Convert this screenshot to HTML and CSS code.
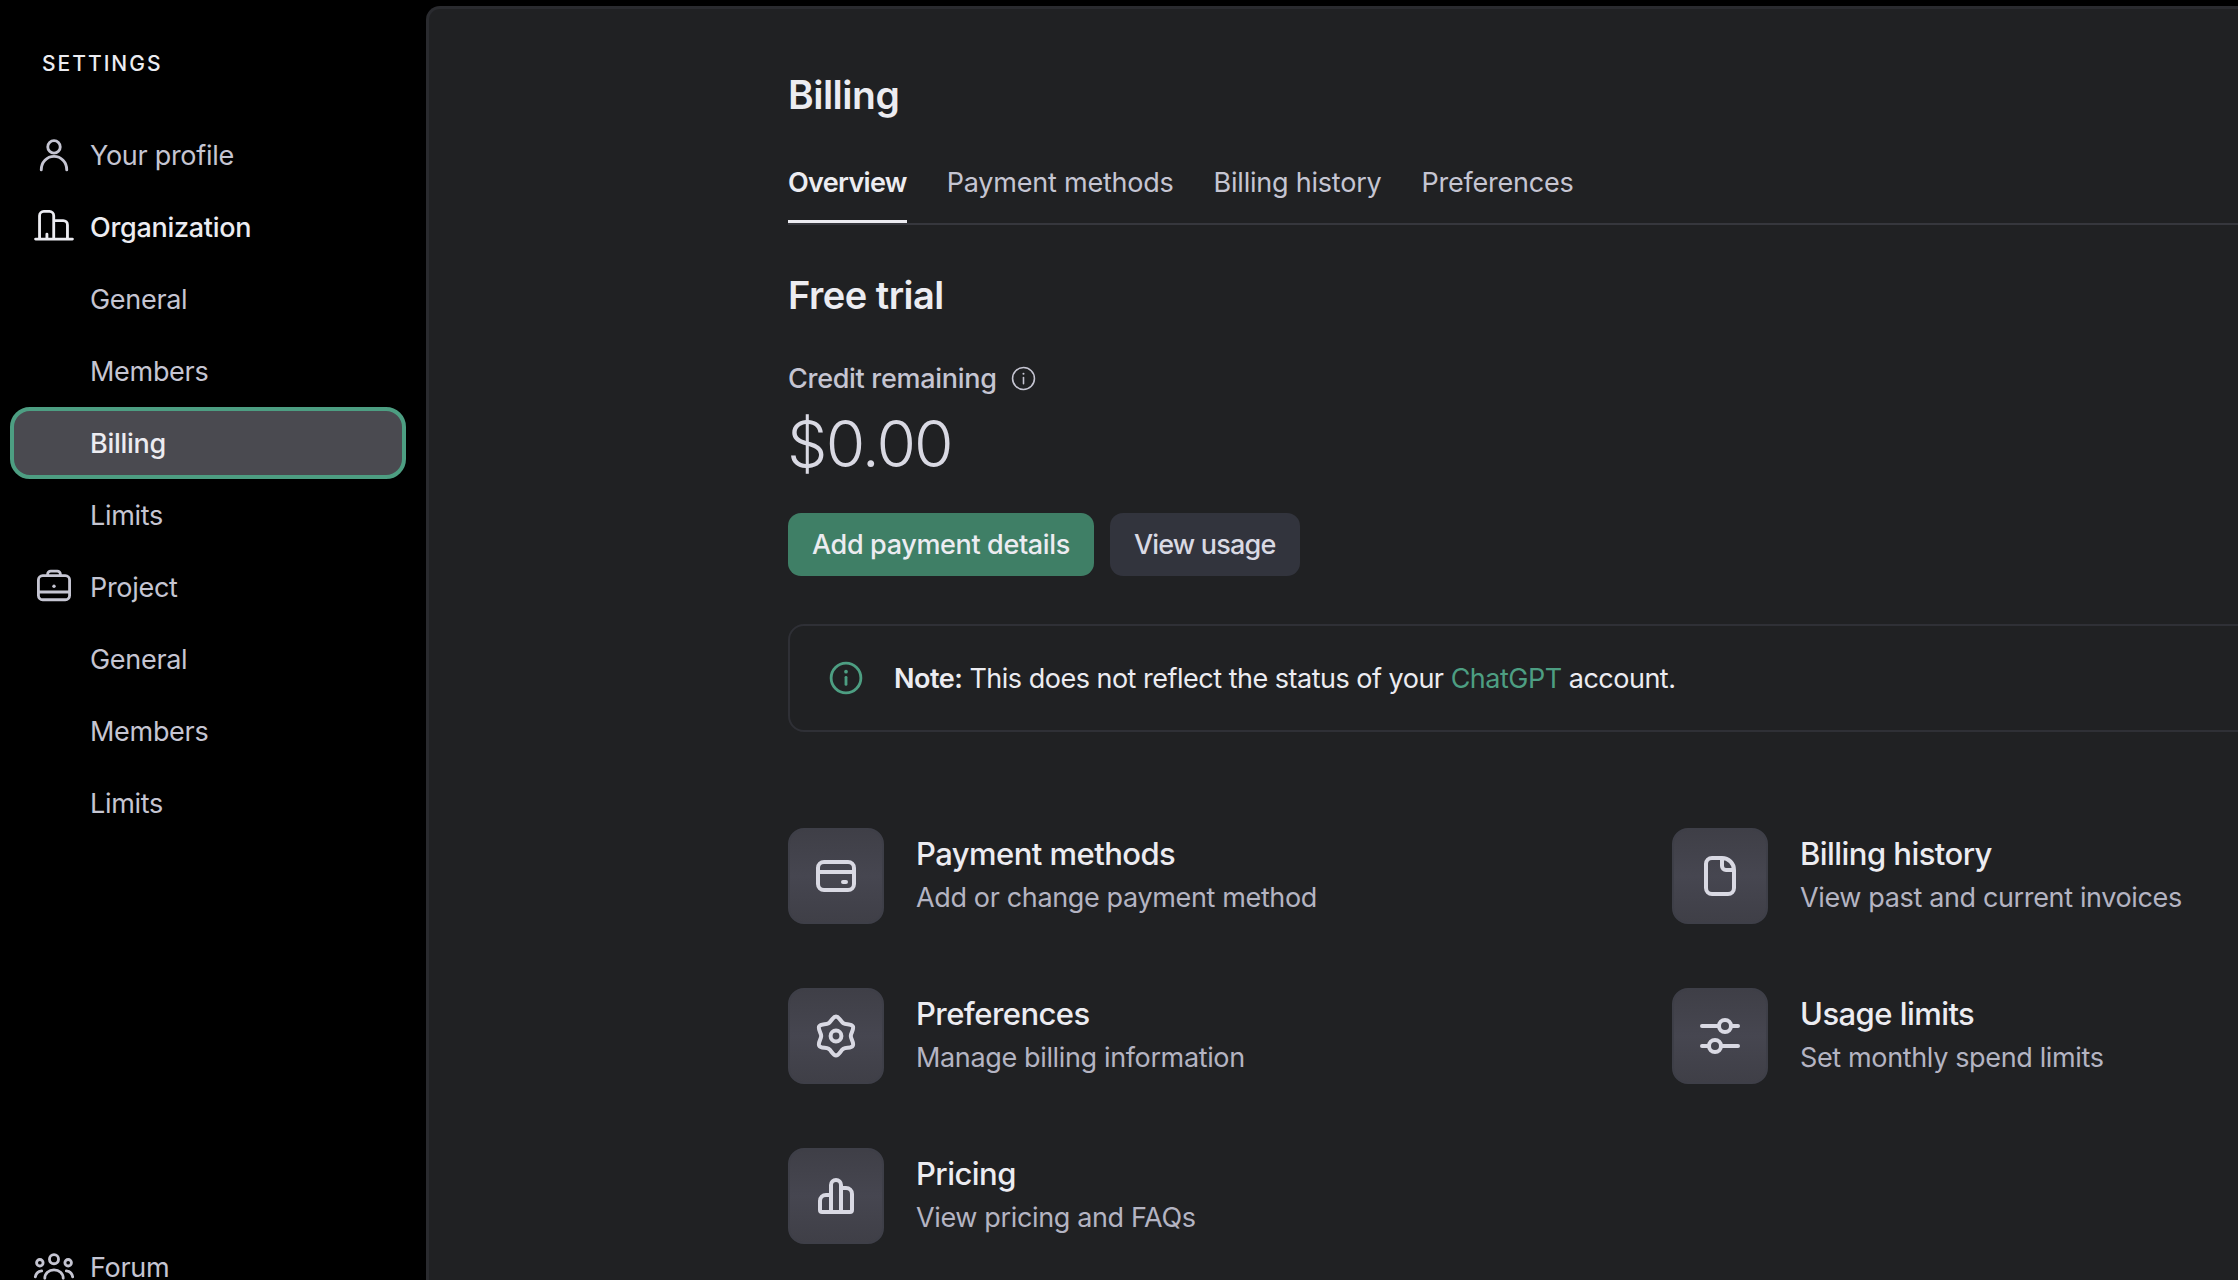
FILE: index.html
```html
<!DOCTYPE html>
<html lang="en">
<head>
<meta charset="utf-8">
<title>Billing</title>
<link rel="stylesheet" href="styles.css">
</head>
<body>
<div class="app">
  <aside class="sidebar">
    <div class="sidebar-title">SETTINGS</div>
    <nav class="nav">
      <a class="nav-row">
        <svg class="nav-icon" viewBox="0 0 24 24"><circle cx="12" cy="6.3" r="4.4"/><path d="M3 22.5c0-5.5 4-9.5 9-9.5s9 4 9 9.5"/></svg>
        <span class="nav-label">Your profile</span>
      </a>
      <a class="nav-row nav-row-strong">
        <svg class="nav-icon" viewBox="0 0 24 24"><path d="M-1 20.5h26M1.8 20.5V4a3 3 0 0 1 3-3h4a3 3 0 0 1 3 3v16.5M12 7.5h6.5a3 3 0 0 1 3 3v10M7 20.5v-3.5"/></svg>
        <span class="nav-label">Organization</span>
      </a>
      <a class="nav-row nav-child">General</a>
      <a class="nav-row nav-child">Members</a>
      <a class="nav-row nav-child nav-active">Billing</a>
      <a class="nav-row nav-child">Limits</a>
      <a class="nav-row">
        <svg class="nav-icon" viewBox="0 0 24 24"><rect x="1" y="4" width="22" height="17" rx="3"/><path d="M7.5 4V3a2.2 2.2 0 0 1 2.2-2.2h4.6A2.2 2.2 0 0 1 16.500 3v1M1 15.500h22"/><circle class="fill-dot" cx="12" cy="11.500" r="1.200"/></svg>
        <span class="nav-label">Project</span>
      </a>
      <a class="nav-row nav-child">General</a>
      <a class="nav-row nav-child">Members</a>
      <a class="nav-row nav-child">Limits</a>
      <a class="nav-row nav-forum">
        <svg class="nav-icon" viewBox="0 0 24 24"><circle cx="12" cy="6.500" r="3.200"/><circle cx="2" cy="9" r="2.300"/><circle cx="22" cy="9" r="2.300"/><path d="M5.500 20c0-3.500 2.800-6 6.500-6s6.500 2.500 6.500 6M-1.200 19c.5-2.500 2-4 4.500-4.300M25.200 19c-.5-2.500-2-4-4.500-4.300"/></svg>
        <span class="nav-label">Forum</span>
      </a>
    </nav>
  </aside>
  <main class="panel">
    <h1 class="page-title">Billing</h1>
    <div class="tabs">
      <a class="tab tab-active">Overview</a>
      <a class="tab">Payment methods</a>
      <a class="tab">Billing history</a>
      <a class="tab">Preferences</a>
    </div>
    <h2 class="section-title">Free trial</h2>
    <div class="credit-label">
      <span>Credit remaining</span>
      <svg class="info-small" viewBox="0 0 24 24"><circle cx="12" cy="12" r="10.500"/><path d="M12 11v6"/><circle class="fill-dot" cx="12" cy="7.500" r="1"/></svg>
    </div>
    <div class="amount">$0.00</div>
    <div class="actions">
      <button class="btn btn-primary">Add payment details</button>
      <button class="btn btn-secondary">View usage</button>
    </div>
    <div class="note">
      <svg class="note-icon" viewBox="0 0 24 24"><circle cx="12" cy="12" r="10.500"/><path d="M12 11.500v5"/><circle class="fill-dot-green" cx="12" cy="7.500" r="1.300"/></svg>
      <p class="note-text"><strong>Note:</strong> This does not reflect the status of your <a class="note-link">ChatGPT</a> account.</p>
    </div>
    <div class="cards">
      <a class="card">
        <span class="tile"><svg class="tile-icon" viewBox="0 0 24 24"><rect x="3" y="5" width="18" height="14" rx="3"/><path d="M3 10h18M15.500 15h1.500"/></svg></span>
        <span class="card-text"><span class="card-title">Payment methods</span><span class="card-sub">Add or change payment method</span></span>
      </a>
      <a class="card">
        <span class="tile"><svg class="tile-icon" viewBox="0 0 24 24"><path d="M13 3H8a3 3 0 0 0-3 3v12a3 3 0 0 0 3 3h8a3 3 0 0 0 3-3V9a6 6 0 0 0-6-6zM13 3v4a2 2 0 0 0 2 2h4"/></svg></span>
        <span class="card-text"><span class="card-title">Billing history</span><span class="card-sub">View past and current invoices</span></span>
      </a>
      <a class="card">
        <span class="tile"><svg class="tile-icon" viewBox="0 0 24 24"><path d="M12 2.300C13.600 2.300 14.310 4.790 15.700 5.590C17.090 6.390 19.600 5.760 20.400 7.150C21.200 8.540 19.400 10.400 19.400 12C19.400 13.600 21.200 15.460 20.400 16.850C19.600 18.240 17.090 17.610 15.700 18.410C14.310 19.210 13.600 21.700 12 21.700C10.400 21.700 9.690 19.210 8.300 18.410C6.910 17.610 4.400 18.240 3.600 16.850C2.800 15.460 4.600 13.600 4.600 12C4.600 10.400 2.800 8.540 3.600 7.150C4.400 5.760 6.910 6.390 8.300 5.590C9.690 4.790 10.400 2.300 12 2.300Z"/><circle cx="12" cy="12" r="2.700"/></svg></span>
        <span class="card-text"><span class="card-title">Preferences</span><span class="card-sub">Manage billing information</span></span>
      </a>
      <a class="card">
        <span class="tile"><svg class="tile-icon" viewBox="0 0 24 24"><circle cx="14.500" cy="7" r="3"/><circle cx="9.500" cy="17" r="3"/><path d="M3 7h8.500M17.500 7H21M3 17h3.500M12.500 17H21"/></svg></span>
        <span class="card-text"><span class="card-title">Usage limits</span><span class="card-sub">Set monthly spend limits</span></span>
      </a>
      <a class="card">
        <span class="tile"><svg class="tile-icon" viewBox="0 0 24 24"><path d="M9.500 20V6.500a2.500 2.500 0 0 1 5 0V20M9.500 11.500H7a3 3 0 0 0-3 3V19a1 1 0 0 0 1 1h14a1 1 0 0 0 1-1v-8a3 3 0 0 0-3-3h-2.500"/></svg></span>
        <span class="card-text"><span class="card-title">Pricing</span><span class="card-sub">View pricing and FAQs</span></span>
      </a>
    </div>
  </main>
</div>
</body>
</html>
```
FILE: styles.css
```css
* { box-sizing: border-box; }
html, body { margin: 0; height: 100%; overflow: hidden; background: #000; }
body { font-family: Inter, "Liberation Sans", sans-serif; color: #ececf1; }
svg { display: block; fill: none; stroke-linecap: round; stroke-linejoin: round; overflow: visible; }

.app { display: flex; height: 1280px; }

.sidebar { width: 426px; flex: none; padding-top: 46px; }
.sidebar-title { margin-left: 42px; height: 36px; line-height: 36px; font-size: 21px; font-weight: 500; letter-spacing: 2px; color: #ececf1; }
.nav { margin-top: 37px; display: flex; flex-direction: column; }
.nav-row { display: flex; align-items: center; gap: 19px; height: 72px; margin: 0 20px 0 10px; padding-left: 27px; font-size: 27px; letter-spacing: -0.3px; color: #c5c5d2; }
.nav-row-strong { color: #ececf1; font-weight: 500; }
.nav-child { padding-left: 80px; }
.nav-active { border: 4px solid #4d9e82; border-radius: 20px; padding-left: 76px; background: #4a4a50; color: #ececf1; font-weight: 500; }
.nav-forum { margin-top: 392px; }
.nav-icon { width: 34px; height: 34px; flex: none; stroke: #c5c5d2; stroke-width: 2; }
.nav-row-strong .nav-icon { stroke: #ececf1; }
.fill-dot { fill: currentColor; stroke: none; color: #c5c5d2; }
.fill-dot-green { fill: #4d9e82; stroke: none; }

.panel { flex: 1; min-width: 0; margin-top: 6px; padding: 61px 0 0 359px; background: #202123; border-top: 3px solid #2a2b2f; border-left: 3px solid #2a2b2f; border-top-left-radius: 14px; overflow: hidden; }
.page-title { margin: 0; height: 50px; line-height: 50px; font-size: 39px; font-weight: 600; letter-spacing: -0.5px; color: #ececf1; }
.tabs { display: flex; gap: 40px; margin-top: 22px; width: 1500px; border-bottom: 2px solid #36373d; }
.tab { display: flex; align-items: center; height: 81px; padding-top: 2px; border-bottom: 3px solid transparent; font-size: 27px; letter-spacing: -0.22px; color: #c5c5d2; }
.tab-active { color: #ececf1; font-weight: 600; letter-spacing: -0.7px; border-bottom-color: #ececf1; }
.section-title { margin: 45px 0 0; height: 50px; line-height: 50px; font-size: 38px; font-weight: 600; letter-spacing: -0.5px; color: #ececf1; }
.credit-label { display: flex; align-items: center; gap: 14px; margin-top: 38px; height: 40px; font-size: 27px; font-weight: 500; letter-spacing: -0.3px; color: #c5c5d2; }
.info-small { width: 25px; height: 25px; stroke: #c5c5d2; stroke-width: 1.500; }
.amount { margin-top: 8px; margin-left: -1px; height: 76px; line-height: 76px; font-size: 64px; font-weight: 300; letter-spacing: -1.8px; color: #d9d9e3; }

.actions { display: flex; gap: 16px; margin-top: 31px; }
.btn { height: 63px; padding: 0 24px; border: 0; border-radius: 13px; font: inherit; font-size: 27px; font-weight: 500; }
.btn-primary { background: #3f7f66; color: #ececf1; letter-spacing: -0.36px; }
.btn-secondary { background: #32343d; color: #d9d9e3; letter-spacing: -0.8px; }

.note { display: flex; align-items: center; gap: 31px; margin-top: 48px; width: 1500px; height: 108px; padding-left: 39px; border: 2px solid #2f3036; border-radius: 16px; }
.note-icon { width: 34px; height: 34px; flex: none; stroke: #4d9e82; stroke-width: 2; }
.note-text { margin: 0; padding-top: 1px; font-size: 27px; letter-spacing: -0.5px; color: #ececf1; }
.note-text strong { font-weight: 600; }
.note-link { color: #4d9e82; }

.cards { display: grid; grid-template-columns: 884px 884px; row-gap: 64px; margin-top: 96px; }
.card { display: flex; align-items: center; gap: 32px; height: 96px; }
.tile { display: flex; align-items: center; justify-content: center; width: 96px; height: 96px; flex: none; border: 2px solid #3e3f48; border-radius: 16px; background: linear-gradient(180deg, #3f3f47 0%, #464650 50%, #3f3f47 100%); }
.tile-icon { width: 48px; height: 48px; stroke: #d9d9e3; stroke-width: 2; }
.card-text { display: flex; flex-direction: column; }
.card-title { height: 44px; line-height: 42px; font-size: 31px; font-weight: 500; letter-spacing: -0.55px; color: #ececf1; }
.card-sub { height: 42px; line-height: 42px; font-size: 27px; letter-spacing: -0.36px; color: #b4b4c2; }
```
